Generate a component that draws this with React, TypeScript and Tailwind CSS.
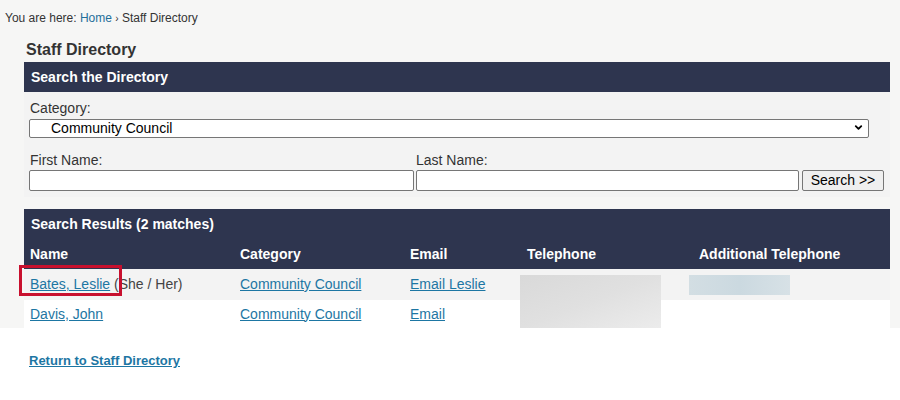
import { ChevronDown } from "lucide-react"

export default function App() {
  const rows = [
    { name: "Bates, Leslie", pronouns: "(She / Her)", category: "Community Council", email: "Email Leslie", highlight: true },
    { name: "Davis, John", pronouns: "", category: "Community Council", email: "Email", highlight: false },
  ]

  return (
    <div className="w-[900px] h-[400px] overflow-hidden bg-white text-[#333] font-['Liberation_Sans',Arial,sans-serif]">
      <div className="bg-[#f6f6f5] pt-[10px]">
        <div className="pl-[5px] text-[12px] leading-[16px] text-[#333]">
          You are here: <a className="text-[#1f6f9a]">Home</a> <span className="text-[10px]">›</span> Staff Directory
        </div>

        <div className="ml-[24px] w-[866px]">
          <h1 className="mt-[13px] pl-[2px] text-[16px] leading-[20px] font-bold text-[#333]">Staff Directory</h1>

          <div className="mt-[2px] h-[30px] bg-[#2e354f] px-[7px] flex items-center text-[14px] font-bold text-white">
            Search the Directory
          </div>

          <div className="bg-[#f3f3f3] px-[5px] pt-[8px] pb-[6px] text-[14px]">
            <div className="leading-[16px] pl-[1px]">Category:</div>
            <div className="relative mt-[2px] w-[840px] h-[19px]">
              <select className="appearance-none w-full h-full border border-[#767676] rounded-[2px] bg-white pl-[21px] text-[14px] leading-[17px] text-black">
                <option>Community Council</option>
              </select>
              <ChevronDown className="absolute right-[5px] top-[4px] w-[11px] h-[11px] text-black pointer-events-none" strokeWidth={4} />
            </div>

            <div className="mt-[15px] flex text-[14px] leading-[16px]">
              <div className="w-[387px] pl-[1px]">First Name:</div>
              <div>Last Name:</div>
            </div>
            <div className="mt-[2px] flex items-center">
              <input className="w-[385px] h-[21px] border border-[#767676] rounded-[2px] bg-white" />
              <input className="ml-[2px] w-[383px] h-[21px] border border-[#767676] rounded-[2px] bg-white" />
              <button className="ml-[3px] w-[82px] h-[21px] border border-[#767676] rounded-[2px] bg-[#efefef] text-[14px] leading-[17px] text-black">
                Search &gt;&gt;
              </button>
            </div>
          </div>

          <div className="mt-[12px] bg-[#2e354f] text-white text-[14px] font-bold">
            <div className="h-[30px] px-[7px] flex items-center">Search Results (2 matches)</div>
            <div className="h-[30px] flex items-center">
              <div className="w-[216px] pl-[6px]">Name</div>
              <div className="w-[170px]">Category</div>
              <div className="w-[117px]">Email</div>
              <div className="w-[172px]">Telephone</div>
              <div>Additional Telephone</div>
            </div>
          </div>

          {rows.map((row, i) => (
            <div
              key={i}
              className={`flex items-center text-[14px] ${i === 0 ? "h-[31px] bg-[#f3f3f3]" : "h-[28px] bg-white"}`}
            >
              <div className="w-[216px] pl-[6px] relative">
                <a className="text-[#1d76a3] underline">{row.name}</a>
                {row.pronouns && <span className="text-[#444]"> {row.pronouns}</span>}
                {row.highlight && (
                  <div className="absolute left-[-5px] top-[-9px] w-[103px] h-[31px] border-[3px] border-[#c8102e]" />
                )}
              </div>
              <div className="w-[170px]">
                <a className="text-[#1d76a3] underline">{row.category}</a>
              </div>
              <div className="w-[110px]">
                <a className="text-[#1d76a3] underline">{row.email}</a>
              </div>
              <div className="w-[169px] relative h-full">
                {i === 0 && (
                  <div className="absolute left-0 top-[6px] w-[141px] h-[53px] bg-gradient-to-br from-[#d9d9d9] via-[#e0e0e0] to-[#ececec]" />
                )}
              </div>
              <div className="relative h-full">
                {i === 0 && (
                  <div className="absolute left-0 top-[6px] w-[101px] h-[20px] bg-gradient-to-r from-[#d3dee3] via-[#cbd9e0] to-[#d7e1e6]" />
                )}
              </div>
            </div>
          ))}
        </div>
      </div>

      <div className="pl-[29px] pt-[20px]">
        <a className="text-[13px] leading-[16px] font-bold text-[#1d76a3] underline">Return to Staff Directory</a>
      </div>
    </div>
  )
}
